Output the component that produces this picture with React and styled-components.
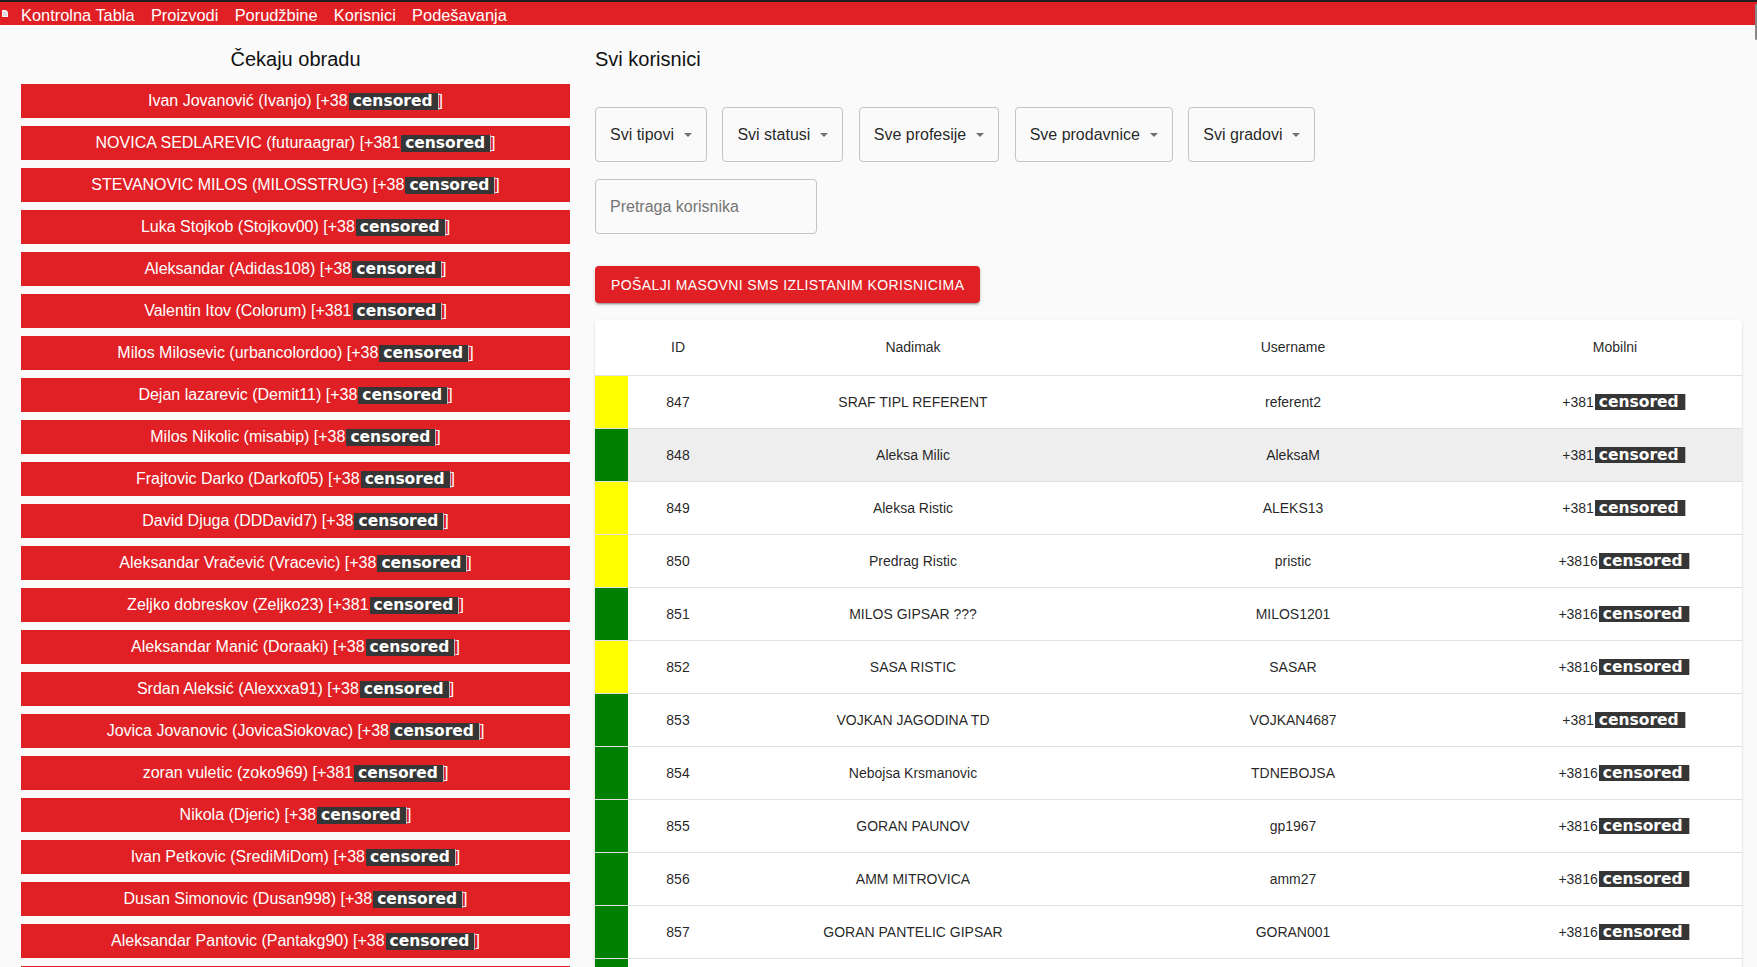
import React from "react";
import styled, { createGlobalStyle } from "styled-components";

const Global = createGlobalStyle`
  html { scrollbar-width: none; }
  html::-webkit-scrollbar, body::-webkit-scrollbar { display: none; width: 0; }
  body {
    margin: 0;
    background: #fafafa;
    font-family: "Liberation Sans", Arial, sans-serif;
    color: rgba(0, 0, 0, 0.87);
  }
  * { box-sizing: border-box; }
`;

const RED = "#e02024";

const TopBar = styled.nav`
  display: flex;
  align-items: center;
  height: 25px;
  background: ${RED};
  border-top: 2px solid #1e1e1e;
  padding-left: 2px;
`;

const NavIcon = styled.svg`
  width: 6px;
  height: 7px;
  margin-top: -1px;
  margin-right: 13px;
  flex: none;
`;

const NavLinks = styled.div`
  display: flex;
  gap: 16.3px;
  padding-top: 2px;
`;

const NavLink = styled.a`
  color: #fff;
  font-size: 16.4px;
  line-height: 18px;
  text-decoration: none;
  white-space: nowrap;
`;

const Main = styled.main`
  display: grid;
  grid-template-columns: 549px 1fr;
  column-gap: 25px;
  padding: 0 15px 0 21px;
`;

const Column = styled.section`
  display: flex;
  flex-direction: column;
  padding-top: 23px;
  min-width: 0;
`;

const PanelTitle = styled.h2`
  margin: 0;
  font-size: 20px;
  line-height: 23px;
  font-weight: 400;
  color: #111;
  text-align: ${(p) => (p.$center ? "center" : "left")};
`;

const PendingList = styled.div`
  display: flex;
  flex-direction: column;
  gap: 8px;
  margin-top: 13px;
`;

const PendingButton = styled.button`
  height: 34px;
  border: none;
  border-radius: 0;
  background: ${RED};
  color: #fff;
  font-family: "Liberation Sans", Arial, sans-serif;
  font-size: 16px;
  display: flex;
  align-items: center;
  justify-content: center;
  white-space: nowrap;
  padding: 0 8px;
  cursor: pointer;
`;

const Censored = styled.span`
  display: inline-block;
  background: #363636;
  color: #fff;
  font-family: "DejaVu Sans", sans-serif;
  font-weight: 700;
  font-size: 15.5px;
  line-height: ${(p) => (p.$small ? "16px" : "17px")};
  padding: 0 ${(p) => (p.$small ? "6px" : "5px")} 0 4px;
  margin-left: 1px;
  margin-right: ${(p) => (p.$small ? "-18px" : "0")};
  border-right: 1px solid #bbb;
`;

const FilterRow = styled.div`
  display: flex;
  gap: 15.4px;
  margin-top: 36px;
`;

const Select = styled.div`
  height: 55px;
  display: flex;
  align-items: center;
  gap: 10px;
  padding: 0 14px 0 14px;
  border: 1px solid #c4c4c4;
  border-radius: 4px;
  font-size: 16px;
  color: rgba(0, 0, 0, 0.87);
  white-space: nowrap;
  cursor: pointer;
`;

const Caret = styled.svg`
  width: 8px;
  height: 4px;
  flex: none;
`;

const SearchInput = styled.input`
  width: 222px;
  height: 55px;
  margin-top: 17px;
  padding: 0 14px;
  border: 1px solid #c4c4c4;
  border-radius: 4px;
  background: transparent;
  font-family: "Liberation Sans", Arial, sans-serif;
  font-size: 16px;
  color: rgba(0, 0, 0, 0.87);
  outline: none;
  &::placeholder { color: #757575; }
`;

const SmsButton = styled.button`
  align-self: flex-start;
  height: 37px;
  margin-top: 32px;
  padding: 0 16px;
  border: none;
  border-radius: 4px;
  background: ${RED};
  color: #fff;
  font-family: "Liberation Sans", Arial, sans-serif;
  font-size: 14px;
  letter-spacing: 0.4px;
  text-transform: uppercase;
  box-shadow: 0 3px 1px -2px rgba(0,0,0,0.2), 0 2px 2px 0 rgba(0,0,0,0.14), 0 1px 5px 0 rgba(0,0,0,0.12);
  cursor: pointer;
`;

const TableCard = styled.div`
  margin-top: 17px;
  background: #fff;
  border-radius: 4px;
  overflow: hidden;
  box-shadow: 0 2px 1px -1px rgba(0,0,0,0.2), 0 1px 1px 0 rgba(0,0,0,0.14), 0 1px 3px 0 rgba(0,0,0,0.12);
`;

const Table = styled.table`
  width: 100%;
  table-layout: fixed;
  border-collapse: separate;
  border-spacing: 0;
  font-size: 14px;
`;

const HeadCell = styled.th`
  padding: 16px;
  line-height: 23px;
  font-weight: 400;
  text-align: center;
  color: rgba(0, 0, 0, 0.87);
  border-bottom: 1px solid #e0e0e0;
`;

const Row = styled.tr`
  background: ${(p) => (p.$active ? "#eeeeee" : "#fff")};
`;

const Cell = styled.td`
  padding: 16px;
  line-height: 20px;
  text-align: center;
  white-space: nowrap;
  border-bottom: 1px solid #e0e0e0;
  color: rgba(0, 0, 0, 0.87);
`;

const StatusCell = styled.td`
  padding: 0;
  background: ${(p) => p.$color};
  border-bottom: 1px solid #e0e0e0;
`;

const ScrollThumb = styled.div`
  position: fixed;
  top: 4px;
  right: 0;
  width: 2px;
  height: 36px;
  background: #888;
  border-radius: 1px;
`;

const pending = [
  "Ivan Jovanović (Ivanjo) [+38",
  "NOVICA SEDLAREVIC (futuraagrar) [+381",
  "STEVANOVIC MILOS (MILOSSTRUG) [+38",
  "Luka Stojkob (Stojkov00) [+38",
  "Aleksandar (Adidas108) [+38",
  "Valentin Itov (Colorum) [+381",
  "Milos Milosevic (urbancolordoo) [+38",
  "Dejan lazarevic (Demit11) [+38",
  "Milos Nikolic (misabip) [+38",
  "Frajtovic Darko (Darkof05) [+38",
  "David Djuga (DDDavid7) [+38",
  "Aleksandar Vračević (Vracevic) [+38",
  "Zeljko dobreskov (Zeljko23) [+381",
  "Aleksandar Manić (Doraaki) [+38",
  "Srdan Aleksić (Alexxxa91) [+38",
  "Jovica Jovanovic (JovicaSiokovac) [+38",
  "zoran vuletic (zoko969) [+381",
  "Nikola (Djeric) [+38",
  "Ivan Petkovic (SrediMiDom) [+38",
  "Dusan Simonovic (Dusan998) [+38",
  "Aleksandar Pantovic (Pantakg90) [+38",
  "Marko Markovic (markom) [+38",
];

const YELLOW = "#ffff00";
const GREEN = "#008000";

const users = [
  { id: 847, nick: "SRAF TIPL REFERENT", user: "referent2", mob: "+381", c: YELLOW },
  { id: 848, nick: "Aleksa Milic", user: "AleksaM", mob: "+381", c: GREEN, active: true },
  { id: 849, nick: "Aleksa Ristic", user: "ALEKS13", mob: "+381", c: YELLOW },
  { id: 850, nick: "Predrag Ristic", user: "pristic", mob: "+3816", c: YELLOW },
  { id: 851, nick: "MILOS GIPSAR ???", user: "MILOS1201", mob: "+3816", c: GREEN },
  { id: 852, nick: "SASA RISTIC", user: "SASAR", mob: "+3816", c: YELLOW },
  { id: 853, nick: "VOJKAN JAGODINA TD", user: "VOJKAN4687", mob: "+381", c: GREEN },
  { id: 854, nick: "Nebojsa Krsmanovic", user: "TDNEBOJSA", mob: "+3816", c: GREEN },
  { id: 855, nick: "GORAN PAUNOV", user: "gp1967", mob: "+3816", c: GREEN },
  { id: 856, nick: "AMM MITROVICA", user: "amm27", mob: "+3816", c: GREEN },
  { id: 857, nick: "GORAN PANTELIC GIPSAR", user: "GORAN001", mob: "+3816", c: GREEN },
  { id: 858, nick: "MILAN PETROVIC", user: "milanp", mob: "+3816", c: GREEN },
];

const filters = ["Svi tipovi", "Svi statusi", "Sve profesije", "Sve prodavnice", "Svi gradovi"];

export default function App() {
  return (
    <>
      <Global />
      <TopBar>
        <NavIcon viewBox="0 0 6 7">
          <path d="M0 0h4l2 2v5H0z" fill="#f4f4f4" />
          <path d="M1 3h4M1 5h4" stroke="#bbb" strokeWidth="0.8" />
        </NavIcon>
        <NavLinks>
          <NavLink href="#">Kontrolna Tabla</NavLink>
          <NavLink href="#">Proizvodi</NavLink>
          <NavLink href="#">Porudžbine</NavLink>
          <NavLink href="#">Korisnici</NavLink>
          <NavLink href="#">Podešavanja</NavLink>
        </NavLinks>
      </TopBar>
      <Main>
        <Column>
          <PanelTitle $center>Čekaju obradu</PanelTitle>
          <PendingList>
            {pending.map((label, i) => (
              <PendingButton key={i}>
                {label}
                <Censored>censored</Censored>]
              </PendingButton>
            ))}
          </PendingList>
        </Column>
        <Column>
          <PanelTitle>Svi korisnici</PanelTitle>
          <FilterRow>
            {filters.map((f) => (
              <Select key={f}>
                {f}
                <Caret viewBox="0 0 8 4">
                  <path d="M0 0h8L4 4z" fill="#707070" />
                </Caret>
              </Select>
            ))}
          </FilterRow>
          <SearchInput placeholder="Pretraga korisnika" />
          <SmsButton>Pošalji masovni SMS izlistanim korisnicima</SmsButton>
          <TableCard>
            <Table>
              <colgroup>
                <col style={{ width: 33 }} />
                <col style={{ width: 100 }} />
                <col style={{ width: 370 }} />
                <col style={{ width: 390 }} />
                <col />
              </colgroup>
              <thead>
                <tr>
                  <HeadCell />
                  <HeadCell>ID</HeadCell>
                  <HeadCell>Nadimak</HeadCell>
                  <HeadCell>Username</HeadCell>
                  <HeadCell>Mobilni</HeadCell>
                </tr>
              </thead>
              <tbody>
                {users.map((u) => (
                  <Row key={u.id} $active={u.active}>
                    <StatusCell $color={u.c} />
                    <Cell>{u.id}</Cell>
                    <Cell>{u.nick}</Cell>
                    <Cell>{u.user}</Cell>
                    <Cell>
                      {u.mob}
                      <Censored $small>censored</Censored>
                    </Cell>
                  </Row>
                ))}
              </tbody>
            </Table>
          </TableCard>
        </Column>
      </Main>
      <ScrollThumb />
    </>
  );
}
